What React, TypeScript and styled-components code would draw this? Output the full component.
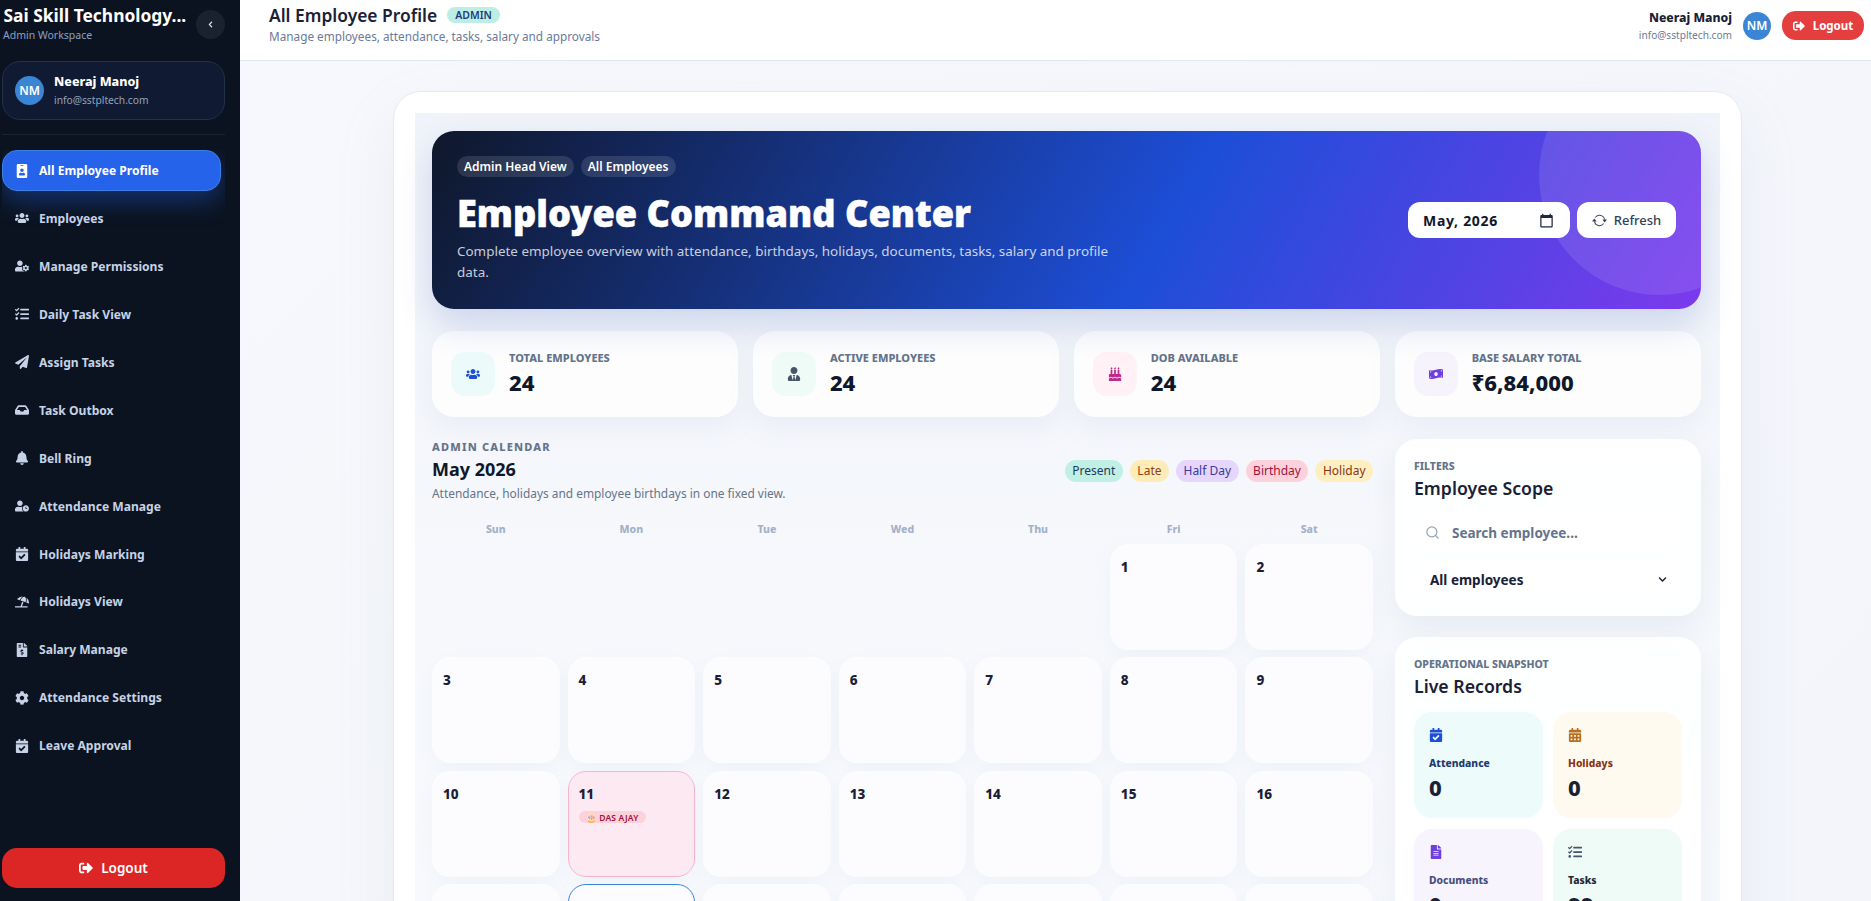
import styled, { createGlobalStyle } from 'styled-components';
import {
  FaBell,
  FaBirthdayCake,
  FaCalendarAlt,
  FaCalendarCheck,
  FaChevronDown,
  FaChevronLeft,
  FaCog,
  FaFileAlt,
  FaFileInvoiceDollar,
  FaIdBadge,
  FaInbox,
  FaMoneyBillWave,
  FaPaperPlane,
  FaSignOutAlt,
  FaTasks,
  FaUmbrellaBeach,
  FaUserClock,
  FaUserCog,
  FaUserTie,
  FaUsers,
} from 'react-icons/fa';
import { BsArrowRepeat } from 'react-icons/bs';
import { Search } from 'lucide-react';

const GlobalStyle = createGlobalStyle`
  * { box-sizing: border-box; }
  html, body { margin: 0; height: 100%; overflow: hidden; }
  body { font-family: "Noto Sans", "Open Sans", sans-serif; color: #0f172a; }
`;

const navItems = [
  { label: 'All Employee Profile', icon: FaIdBadge, active: true },
  { label: 'Employees', icon: FaUsers },
  { label: 'Manage Permissions', icon: FaUserCog },
  { label: 'Daily Task View', icon: FaTasks },
  { label: 'Assign Tasks', icon: FaPaperPlane },
  { label: 'Task Outbox', icon: FaInbox },
  { label: 'Bell Ring', icon: FaBell },
  { label: 'Attendance Manage', icon: FaUserClock },
  { label: 'Holidays Marking', icon: FaCalendarCheck },
  { label: 'Holidays View', icon: FaUmbrellaBeach },
  { label: 'Salary Manage', icon: FaFileInvoiceDollar },
  { label: 'Attendance Settings', icon: FaCog },
  { label: 'Leave Approval', icon: FaCalendarCheck },
];

const stats = [
  { label: 'Total Employees', value: '24', icon: FaUsers, bg: '#ecfbfa', fg: '#1d4ed8' },
  { label: 'Active Employees', value: '24', icon: FaUserTie, bg: '#eefbf6', fg: '#475569' },
  { label: 'DOB Available', value: '24', icon: FaBirthdayCake, bg: '#fff1f5', fg: '#be2a8a' },
  { label: 'Base Salary Total', value: '₹6,84,000', icon: FaMoneyBillWave, bg: '#f6f3fd', fg: '#6d3fe0' },
];

const legend = [
  { label: 'Present', bg: '#c0f0e4', fg: '#1e3a5f' },
  { label: 'Late', bg: '#fdecb8', fg: '#92400e' },
  { label: 'Half Day', bg: '#e6d6fc', fg: '#3b3a9e' },
  { label: 'Birthday', bg: '#fdd1dc', fg: '#9f1239' },
  { label: 'Holiday', bg: '#feefc0', fg: '#8a3412' },
];

const weekdays = ['Sun', 'Mon', 'Tue', 'Wed', 'Thu', 'Fri', 'Sat'];
const days = Array.from({ length: 31 }, (_, i) => i + 1);

const tiles = [
  { label: 'Attendance', value: '0', icon: FaCalendarCheck, bg: '#edfbfa', fg: '#1d4ed8', text: '#1e3a6e' },
  { label: 'Holidays', value: '0', icon: FaCalendarAlt, bg: '#fffaf0', fg: '#b8701f', text: '#8a3412' },
  { label: 'Documents', value: '0', icon: FaFileAlt, bg: '#f8f4fd', fg: '#6d3fe0', text: '#46507e' },
  { label: 'Tasks', value: '99', icon: FaTasks, bg: '#eefbf6', fg: '#475569', text: '#1e293b' },
];

const Page = styled.div`
  display: flex;
  height: 100vh;
  overflow: hidden;
`;

const Sidebar = styled.aside`
  width: 240px;
  flex: none;
  display: flex;
  flex-direction: column;
  background: #0b1320;
  padding: 0 15px 13px 2px;
`;

const Brand = styled.div`
  display: flex;
  align-items: flex-start;
  justify-content: space-between;
  height: 61px;
  padding-top: 3px;
`;

const BrandName = styled.div`
  font-size: 17.4px;
  line-height: 24px;
  font-weight: 700;
  color: #fff;
  padding-left: 1px;
  margin-left: 0.5px;
`;

const BrandSub = styled.div`
  font-size: 10.5px;
  line-height: 14px;
  margin-top: 1px;
  color: #8ea0c0;
  padding-left: 1px;
`;

const Collapse = styled.button`
  width: 29px;
  height: 29px;
  margin-top: 7px;
  border: 0;
  border-radius: 50%;
  background: #1a2230;
  color: #e2e8f0;
  display: flex;
  align-items: center;
  justify-content: center;
  font-size: 7px;
  padding: 0;
`;

const UserCard = styled.div`
  display: flex;
  align-items: center;
  gap: 10px;
  height: 59px;
  padding: 0 12px;
  border-radius: 18px;
  background: #101b33;
  border: 1px solid #22304a;
`;

const Avatar = styled.div<{ $size?: number }>`
  width: ${(p) => p.$size ?? 29}px;
  height: ${(p) => p.$size ?? 29}px;
  flex: none;
  border-radius: 50%;
  background: #3b86d4;
  color: #fff;
  font-size: 12px;
  font-weight: 600;
  display: flex;
  align-items: center;
  justify-content: center;
`;

const UserName = styled.div`
  font-size: 12.5px;
  line-height: 18px;
  font-weight: 800;
  color: #fff;
`;

const UserMail = styled.div`
  font-size: 10.25px;
  line-height: 16px;
  margin-top: 1px;
  color: #94a3b8;
`;

const Divider = styled.div`
  height: 1px;
  margin: 14px 0 15px;
  background: #1a2334;
`;

const NavList = styled.nav`
  flex: 1;
  min-height: 0;
  overflow: hidden;
  display: flex;
  flex-direction: column;
  gap: 6.95px;
  padding-right: 4px;
`;

const NavItem = styled.a<{ $active?: boolean }>`
  flex: none;
  display: flex;
  align-items: center;
  gap: 10px;
  height: 41px;
  padding: 0 12px;
  border-radius: 15px;
  border: 1px solid ${(p) => (p.$active ? '#3b82e6' : 'transparent')};
  background: ${(p) => (p.$active ? '#2563eb' : 'transparent')};
  box-shadow: ${(p) => (p.$active ? '0 10px 24px rgba(37, 99, 235, 0.38)' : 'none')};
  color: ${(p) => (p.$active ? '#fff' : '#c6d2e6')};
  font-size: 12.1px;
  font-weight: 700;
  white-space: nowrap;
  svg {
    width: 14px;
    height: 14px;
    flex: none;
  }
`;

const SideLogout = styled.button`
  flex: none;
  height: 40px;
  border: 0;
  border-radius: 15px;
  background: #dc2626;
  color: #fff;
  font: 600 13.5px "Noto Sans", sans-serif;
  display: flex;
  align-items: center;
  justify-content: center;
  gap: 8px;
  svg {
    width: 14px;
    height: 14px;
  }
`;

const Main = styled.main`
  flex: 1;
  min-width: 0;
  display: flex;
  flex-direction: column;
  background: linear-gradient(135deg, #f7f8fc 0%, #f3f5fb 100%);
`;

const TopBar = styled.header`
  flex: none;
  height: 61px;
  background: #fff;
  border-bottom: 1px solid #e2e8f0;
  display: flex;
  align-items: center;
  justify-content: space-between;
  padding: 0 7px 9px 29px;
`;

const TitleBlock = styled.div`
  margin-top: -4px;
`;

const TitleRow = styled.div`
  display: flex;
  align-items: center;
  gap: 10px;
  height: 24px;
`;

const PageTitle = styled.div`
  font-size: 17.4px;
  font-weight: 600;
  color: #1a2035;
  margin-top: -1px;
`;

const RoleBadge = styled.span`
  height: 16px;
  padding: 0 8px;
  border-radius: 999px;
  background: #bdeee6;
  color: #1e3a7a;
  font-size: 10.5px;
  font-weight: 600;
  display: flex;
  align-items: center;
`;

const PageSub = styled.div`
  font-size: 11.78px;
  line-height: 16px;
  margin-top: 1px;
  color: #6b7a99;
`;

const TopRight = styled.div`
  display: flex;
  align-items: center;
  gap: 11px;
`;

const TopUser = styled.div`
  text-align: right;
`;

const TopName = styled.div`
  font-size: 12.2px;
  line-height: 18px;
  font-weight: 800;
  color: #1a2035;
`;

const TopMail = styled.div`
  font-size: 10.1px;
  line-height: 16px;
  color: #6b7a99;
`;

const TopLogout = styled.button`
  width: 82px;
  height: 29px;
  border: 0;
  border-radius: 14px;
  background: #e53e3e;
  color: #fff;
  font: 700 11.5px "Noto Sans", sans-serif;
  display: flex;
  align-items: center;
  justify-content: center;
  gap: 8px;
  padding: 0;
  svg {
    width: 12px;
    height: 12px;
  }
`;

const Content = styled.div`
  flex: 1;
  min-height: 0;
  overflow: hidden;
  padding: 30px 129px 0 153px;
`;

const Shell = styled.div`
  background: #fff;
  border: 1px solid #e4e9f3;
  border-radius: 28px;
  padding: 21px;
  box-shadow: 0 24px 60px rgba(148, 163, 184, 0.12);
`;

const Inner = styled.div`
  background: linear-gradient(180deg, #f0f3f9 0%, #f6f8fc 40%, #f9fafe 100%);
  padding: 18px 19px 40px 17px;
  display: flex;
  flex-direction: column;
`;

const Hero = styled.section`
  position: relative;
  overflow: hidden;
  height: 178px;
  border-radius: 22px;
  padding: 25px;
  display: flex;
  align-items: center;
  justify-content: space-between;
  background: linear-gradient(120deg, #0f172a 0%, #1d4ed8 58%, #7c3aed 100%);
  box-shadow: 0 16px 34px rgba(37, 70, 170, 0.18);
  &::after {
    content: '';
    position: absolute;
    top: -76px;
    right: -78px;
    width: 240px;
    height: 240px;
    border-radius: 50%;
    background: rgba(255, 255, 255, 0.1);
  }
`;

const HeroText = styled.div`
  max-width: 680px;
  align-self: flex-start;
`;

const HeroTags = styled.div`
  display: flex;
  gap: 7px;
`;

const HeroTag = styled.span`
  height: 21px;
  padding: 0 7px;
  border-radius: 999px;
  background: rgba(255, 255, 255, 0.12);
  color: #fff;
  font-size: 12px;
  font-weight: 600;
  display: flex;
  align-items: center;
`;

const HeroTitle = styled.h1`
  margin: 11px 0 3px;
  font-size: 36.2px;
  line-height: 50px;
  font-weight: 900;
  -webkit-text-stroke: 0.5px #fff;
  color: #fff;
`;

const HeroSub = styled.p`
  margin: 0;
  font-size: 13.45px;
  line-height: 21px;
  color: rgba(255, 255, 255, 0.78);
`;

const HeroActions = styled.div`
  position: relative;
  z-index: 1;
  display: flex;
  gap: 7px;
`;

const MonthField = styled.div`
  width: 162px;
  height: 36px;
  border-radius: 12px;
  background: #fff;
  padding: 0 16px 0 15px;
  display: flex;
  align-items: center;
  justify-content: space-between;
  font-size: 14px;
  font-weight: 700;
  letter-spacing: 0.7px;
  color: #0f172a;
`;

const RefreshButton = styled.button`
  width: 99px;
  height: 36px;
  border: 0;
  border-radius: 12px;
  background: #fff;
  color: #334155;
  font: 500 13px "Noto Sans", sans-serif;
  display: flex;
  align-items: center;
  justify-content: center;
  gap: 7px;
  padding: 0;
`;

const StatGrid = styled.section`
  display: grid;
  grid-template-columns: repeat(4, 1fr);
  gap: 14.5px;
  margin-top: 22px;
`;

const StatCard = styled.div`
  height: 86px;
  border-radius: 22px;
  background: rgba(255, 255, 255, 0.78);
  box-shadow: 0 10px 26px rgba(148, 163, 184, 0.1);
  padding: 0 19px;
  display: flex;
  align-items: center;
  gap: 14px;
`;

const StatIcon = styled.div<{ $bg: string; $fg: string }>`
  width: 44px;
  height: 44px;
  border-radius: 14px;
  flex: none;
  background: ${(p) => p.$bg};
  color: ${(p) => p.$fg};
  display: flex;
  align-items: center;
  justify-content: center;
  font-size: 14px;
`;

const StatLabel = styled.div`
  font-size: 11px;
  line-height: 14px;
  font-weight: 800;
  text-transform: uppercase;
  color: #64748b;
`;

const StatValue = styled.div`
  font-size: 22px;
  line-height: 29px;
  font-weight: 800;
  color: #0f172a;
  margin-top: 3px;
`;

const Columns = styled.div`
  display: grid;
  grid-template-columns: 941px 306px;
  justify-content: space-between;
  margin-top: 22px;
`;

const CalendarHead = styled.div`
  display: flex;
  align-items: center;
  justify-content: space-between;
`;

const Eyebrow = styled.div`
  font-size: 11px;
  line-height: 14px;
  font-weight: 800;
  letter-spacing: 1.2px;
  text-transform: uppercase;
  color: #64748b;
  margin-top: 1px;
`;

const MonthTitle = styled.div`
  font-size: 18px;
  line-height: 26px;
  font-weight: 700;
  color: #0f172a;
  margin-top: 2px;
`;

const MonthSub = styled.div`
  font-size: 11.9px;
  line-height: 18px;
  color: #64748b;
  margin-top: 2px;
`;

const Legend = styled.div`
  display: flex;
  gap: 7px;
`;

const LegendPill = styled.span<{ $bg: string; $fg: string }>`
  height: 22px;
  padding: 0 7.5px;
  border-radius: 999px;
  background: ${(p) => p.$bg};
  color: ${(p) => p.$fg};
  font-size: 12px;
  display: flex;
  align-items: center;
`;

const WeekRow = styled.div`
  display: grid;
  grid-template-columns: repeat(7, 1fr);
  gap: 8px;
  margin-top: 20px;
  height: 22px;
`;

const WeekDay = styled.div`
  text-align: center;
  font-size: 10.5px;
  line-height: 14px;
  font-weight: 800;
  color: #a3b1c9;
`;

const DayGrid = styled.div`
  display: grid;
  grid-template-columns: repeat(7, 1fr);
  grid-auto-rows: 106px;
  column-gap: 8px;
  row-gap: 7.4px;
`;

const DayCell = styled.div<{ $birthday?: boolean; $today?: boolean }>`
  border-radius: 18px;
  padding: 12px 10px;
  background: ${(p) => (p.$birthday ? '#fde9f2' : '#fcfcff')};
  border: 1px solid ${(p) => (p.$birthday ? '#f9b6ca' : p.$today ? '#3b86d4' : 'transparent')};
  box-shadow: 0 6px 18px rgba(148, 163, 184, 0.07);
`;

const DayNumber = styled.div`
  font-size: 13.5px;
  line-height: 20px;
  font-weight: 800;
  color: #1a2035;
`;

const BirthdayChip = styled.span`
  display: inline-flex;
  align-items: center;
  gap: 4px;
  height: 12px;
  margin-top: 7px;
  padding: 0 7px;
  border-radius: 999px;
  background: #fdd1dc;
  color: #9f1239;
  font-size: 8.5px;
  font-weight: 600;
  letter-spacing: 0.2px;
  white-space: nowrap;
`;

const Aside = styled.aside`
  display: flex;
  flex-direction: column;
  gap: 21px;
  margin-top: -0.5px;
`;

const Panel = styled.section`
  border-radius: 22px;
  background: rgba(255, 255, 255, 0.9);
  box-shadow: 0 14px 30px rgba(148, 163, 184, 0.14);
  padding: 20px 19px 18px;
`;

const PanelEyebrow = styled.div`
  font-size: 10.5px;
  line-height: 14px;
  font-weight: 800;
  text-transform: uppercase;
  color: #64748b;
`;

const PanelTitle = styled.div`
  font-size: 17.7px;
  line-height: 24px;
  font-weight: 600;
  color: #1a2035;
  margin-top: 3px;
`;

const FieldRow = styled.div`
  height: 36px;
  border-radius: 12px;
  background: #fff;
  margin-top: 15px;
  padding: 0 15px 0 11px;
  display: flex;
  align-items: center;
  gap: 12px;
  font-size: 13.5px;
  font-weight: 700;
`;

const SearchText = styled.span`
  color: #64748b;
`;

const SelectRow = styled(FieldRow)`
  justify-content: space-between;
  margin-top: 11px;
  padding-left: 16px;
  color: #1a2035;
`;

const TileGrid = styled.div`
  display: grid;
  grid-template-columns: 1fr 1fr;
  gap: 11px 10px;
  margin-top: 14px;
`;

const Tile = styled.div<{ $bg: string }>`
  height: 106px;
  border-radius: 18px;
  background: ${(p) => p.$bg};
  padding: 16px 15px;
`;

const TileIcon = styled.div<{ $fg: string }>`
  color: ${(p) => p.$fg};
  height: 14px;
  font-size: 14px;
  line-height: 14px;
`;

const TileLabel = styled.div<{ $fg: string }>`
  color: ${(p) => p.$fg};
  font-size: 10.3px;
  line-height: 14px;
  font-weight: 800;
  margin-top: 14px;
`;

const TileValue = styled.div`
  font-size: 22px;
  line-height: 28px;
  font-weight: 800;
  color: #1a2035;
  margin-top: 3px;
`;

const MonthIcon = () => (
  <svg width="15" height="15" viewBox="0 0 24 24" fill="#1e293b">
    <path d="M20 3h-1V1h-2v2H7V1H5v2H4c-1.1 0-2 .9-2 2v16c0 1.1.9 2 2 2h16c1.1 0 2-.9 2-2V5c0-1.1-.9-2-2-2zm0 18H4V8h16v13z" />
  </svg>
);

const App = () => {
  return (
    <Page>
      <GlobalStyle />
      <Sidebar>
        <Brand>
          <div>
            <BrandName>Sai Skill Technology...</BrandName>
            <BrandSub>Admin Workspace</BrandSub>
          </div>
          <Collapse>
            <FaChevronLeft />
          </Collapse>
        </Brand>
        <UserCard>
          <Avatar>NM</Avatar>
          <div>
            <UserName>Neeraj Manoj</UserName>
            <UserMail>info@sstpltech.com</UserMail>
          </div>
        </UserCard>
        <Divider />
        <NavList>
          {navItems.map((item) => (
            <NavItem key={item.label} $active={item.active}>
              <item.icon />
              {item.label}
            </NavItem>
          ))}
        </NavList>
        <SideLogout>
          <FaSignOutAlt />
          Logout
        </SideLogout>
      </Sidebar>
      <Main>
        <TopBar>
          <TitleBlock>
            <TitleRow>
              <PageTitle>All Employee Profile</PageTitle>
              <RoleBadge>ADMIN</RoleBadge>
            </TitleRow>
            <PageSub>Manage employees, attendance, tasks, salary and approvals</PageSub>
          </TitleBlock>
          <TopRight>
            <TopUser>
              <TopName>Neeraj Manoj</TopName>
              <TopMail>info@sstpltech.com</TopMail>
            </TopUser>
            <Avatar $size={28}>NM</Avatar>
            <TopLogout>
              <FaSignOutAlt />
              Logout
            </TopLogout>
          </TopRight>
        </TopBar>
        <Content>
          <Shell>
            <Inner>
              <Hero>
                <HeroText>
                  <HeroTags>
                    <HeroTag>Admin Head View</HeroTag>
                    <HeroTag>All Employees</HeroTag>
                  </HeroTags>
                  <HeroTitle>Employee Command Center</HeroTitle>
                  <HeroSub>
                    Complete employee overview with attendance, birthdays, holidays, documents, tasks, salary and
                    profile data.
                  </HeroSub>
                </HeroText>
                <HeroActions>
                  <MonthField>
                    May, 2026
                    <MonthIcon />
                  </MonthField>
                  <RefreshButton>
                    <BsArrowRepeat size={15} />
                    Refresh
                  </RefreshButton>
                </HeroActions>
              </Hero>
              <StatGrid>
                {stats.map((s) => (
                  <StatCard key={s.label}>
                    <StatIcon $bg={s.bg} $fg={s.fg}>
                      <s.icon />
                    </StatIcon>
                    <div>
                      <StatLabel>{s.label}</StatLabel>
                      <StatValue>{s.value}</StatValue>
                    </div>
                  </StatCard>
                ))}
              </StatGrid>
              <Columns>
                <div>
                  <CalendarHead>
                    <div>
                      <Eyebrow>Admin Calendar</Eyebrow>
                      <MonthTitle>May 2026</MonthTitle>
                      <MonthSub>Attendance, holidays and employee birthdays in one fixed view.</MonthSub>
                    </div>
                    <Legend>
                      {legend.map((l) => (
                        <LegendPill key={l.label} $bg={l.bg} $fg={l.fg}>
                          {l.label}
                        </LegendPill>
                      ))}
                    </Legend>
                  </CalendarHead>
                  <WeekRow>
                    {weekdays.map((d) => (
                      <WeekDay key={d}>{d}</WeekDay>
                    ))}
                  </WeekRow>
                  <DayGrid>
                    {[0, 1, 2, 3, 4].map((i) => (
                      <div key={i} />
                    ))}
                    {days.map((d) => (
                      <DayCell key={d} $birthday={d === 11} $today={d === 18}>
                        <DayNumber>{d}</DayNumber>
                        {d === 11 && <BirthdayChip>🎂 DAS AJAY</BirthdayChip>}
                      </DayCell>
                    ))}
                  </DayGrid>
                </div>
                <Aside>
                  <Panel>
                    <PanelEyebrow>Filters</PanelEyebrow>
                    <PanelTitle>Employee Scope</PanelTitle>
                    <FieldRow>
                      <Search size={15} color="#94a3b8" />
                      <SearchText>Search employee...</SearchText>
                    </FieldRow>
                    <SelectRow>
                      All employees
                      <FaChevronDown size={9} />
                    </SelectRow>
                  </Panel>
                  <Panel>
                    <PanelEyebrow>Operational Snapshot</PanelEyebrow>
                    <PanelTitle>Live Records</PanelTitle>
                    <TileGrid>
                      {tiles.map((t) => (
                        <Tile key={t.label} $bg={t.bg}>
                          <TileIcon $fg={t.fg}>
                            <t.icon />
                          </TileIcon>
                          <TileLabel $fg={t.text}>{t.label}</TileLabel>
                          <TileValue>{t.value}</TileValue>
                        </Tile>
                      ))}
                    </TileGrid>
                  </Panel>
                </Aside>
              </Columns>
            </Inner>
          </Shell>
        </Content>
      </Main>
    </Page>
  );
};

export default App;
